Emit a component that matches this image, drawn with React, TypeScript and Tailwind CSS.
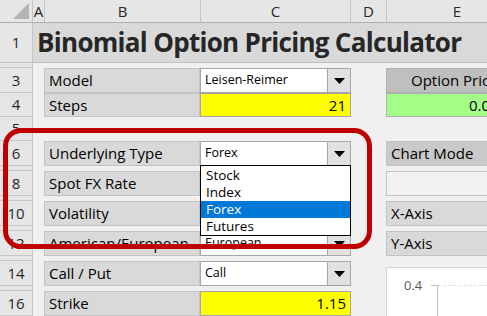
import React from 'react';

const hdr = "bg-[#e6e6e6] text-[#262626]";

function Caret() {
  return (
    <div className="w-[23px] h-full bg-[#e1e1e1] border-l border-[#a6a6a6] flex items-center justify-center">
      <svg width="11" height="6" viewBox="0 0 11 6">
        <polygon points="0,0 11,0 5.5,6" fill="#000" />
      </svg>
    </div>
  );
}

function Row({ n, h, children }: { n?: string; h: string; children?: React.ReactNode }) {
  return (
    <div className={`flex ${h}`}>
      <div className={`${hdr} w-[33px] shrink-0 border-r border-b border-[#c6c6c6] flex items-center justify-center text-[15px] leading-none overflow-hidden`}>
        {n}
      </div>
      <div className="flex flex-1 min-w-0">{children}</div>
    </div>
  );
}

function Label({ text, w = "w-[156px]", bg = "bg-[#d9d9d9]" }: { text?: string; w?: string; bg?: string }) {
  return (
    <div className={`${w} ${bg} shrink-0 border border-[#c3c3c3] pl-[4px] flex items-center text-[15px] text-black whitespace-nowrap overflow-hidden`}>
      {text}
    </div>
  );
}

function Select({ value }: { value: string }) {
  return (
    <div className="w-[151px] shrink-0 bg-white border border-[#a6a6a6] flex items-center">
      <span className="flex-1 pl-[4px] text-[12.5px] text-black whitespace-nowrap overflow-hidden">{value}</span>
      <Caret />
    </div>
  );
}

function Input({ value }: { value: string }) {
  return (
    <div className="w-[151px] shrink-0 bg-[#ffff00] border border-[#a6a6a6] flex items-center justify-end pr-[4px] text-[15px] text-black">
      {value}
    </div>
  );
}

function Cells({ b, c, e }: { b?: React.ReactNode; c?: React.ReactNode; e?: React.ReactNode }) {
  return (
    <>
      <div className="w-[11px] shrink-0" />
      {b}
      {c}
      <div className="w-[35px] shrink-0" />
      {e}
    </>
  );
}

const Gap = ({ n }: { n?: string }) => <Row n={n} h="h-[5px]" />;

export default function App() {
  return (
    <div className="relative w-[487px] h-[316px] overflow-hidden bg-[#f0f0f0] font-['Open_Sans',sans-serif]">
      {/* Column headers */}
      <div className={`flex h-[23px] ${hdr} border-b border-[#b0b0b0] text-[15px]`}>
        <div className="w-[33px] shrink-0 border-r border-[#c6c6c6] relative">
          <svg className="absolute right-[3px] bottom-[3px]" width="16" height="16" viewBox="0 0 16 16">
            <polygon points="16,0 16,16 0,16" fill="#b4b4b4" />
          </svg>
        </div>
        <div className="w-[12px] shrink-0 border-r border-[#c6c6c6] flex items-center justify-center overflow-hidden">A</div>
        <div className="w-[156px] shrink-0 border-r border-[#c6c6c6] flex items-center justify-center">B</div>
        <div className="w-[150px] shrink-0 border-r border-[#c6c6c6] flex items-center justify-center">C</div>
        <div className="w-[36px] shrink-0 border-r border-[#c6c6c6] flex items-center justify-center">D</div>
        <div className="w-[140px] shrink-0 flex items-center justify-center">E</div>
      </div>

      <Row n="1" h="h-[40px]">
        <div className="flex-1 bg-[#d9d9d9] border-b border-[#c0c0c0] flex items-center pl-[4px] text-[26px] font-bold tracking-[-0.7px] text-[#262626] whitespace-nowrap">
          Binomial Option Pricing Calculator
        </div>
      </Row>
      <Gap />
      <Row n="3" h="h-[25px]">
        <Cells
          b={<Label text="Model" />}
          c={<Select value="Leisen-Reimer" />}
          e={
            <div className="w-[150px] shrink-0 bg-[#bfbfbf] border border-[#b0b0b0] pl-[24px] flex items-center text-[15px] text-black whitespace-nowrap">
              Option Price
            </div>
          }
        />
      </Row>
      <Row n="4" h="h-[24px]">
        <Cells
          b={<Label text="Steps" />}
          c={<Input value="21" />}
          e={
            <div className="w-[150px] shrink-0 bg-[#a4ff88] border border-[#b0b0b0] pl-[82px] flex items-center text-[15px] text-black">
              0.0
            </div>
          }
        />
      </Row>
      <Row n="5" h="h-[24px]" />
      <Row n="6" h="h-[25px]">
        <Cells
          b={<Label text="Underlying Type" />}
          c={<Select value="Forex" />}
          e={<Label text="Chart Mode" w="w-[150px]" bg="bg-[#c9c9c9]" />}
        />
      </Row>
      <Gap />
      <Row n="8" h="h-[25px]">
        <Cells
          b={<Label text="Spot FX Rate" />}
          c={<Input value="1.1000" />}
          e={<Label w="w-[150px]" bg="bg-[#f2f2f2]" />}
        />
      </Row>
      <Gap />
      <Row n="10" h="h-[25px]">
        <Cells
          b={<Label text="Volatility" />}
          c={<Input value="10.00%" />}
          e={<Label text="X-Axis" w="w-[150px]" />}
        />
      </Row>
      <Gap />
      <Row n="12" h="h-[25px]">
        <Cells
          b={<Label text="American/European" />}
          c={<Select value="European" />}
          e={<Label text="Y-Axis" w="w-[150px]" />}
        />
      </Row>
      <Gap />
      <Row n="14" h="h-[25px]">
        <Cells b={<Label text="Call / Put" />} c={<Select value="Call" />} />
      </Row>
      <Gap />
      <Row n="16" h="h-[25px]">
        <Cells b={<Label text="Strike" />} c={<Input value="1.15" />} />
      </Row>

      {/* Chart object */}
      <div className="absolute left-[386px] top-[267px] w-[140px] h-[70px] bg-white border border-[#d4d4d4]">
        <span className="absolute left-[17px] top-[8px] text-[13px] text-[#595959]">0.4</span>
        <div className="absolute left-[44px] top-[17px] w-[6px] h-px bg-[#bfbfbf]" />
        <div className="absolute left-[50px] top-[17px] w-px h-[60px] bg-[#bfbfbf]" />
        <div className="absolute left-[51px] top-[17px] w-[100px] border-t border-dashed border-[#e0e0e0]" />
      </div>

      {/* Red annotation */}
      <div className="absolute left-[3px] top-[128px] w-[369px] h-[121px] border-[5px] border-[#c00000] rounded-[18px]" />

      {/* Open dropdown list */}
      <div className="absolute left-[200px] top-[165px] w-[151px] h-[71px] bg-white border border-black py-px text-[13.5px] text-black">
        <div className="h-[17px] pl-[5px] flex items-center">Stock</div>
        <div className="h-[17px] pl-[5px] flex items-center">Index</div>
        <div className="h-[17px] pl-[5px] flex items-center bg-[#0078d7] text-white">Forex</div>
        <div className="h-[17px] pl-[5px] flex items-center">Futures</div>
      </div>
    </div>
  );
}
